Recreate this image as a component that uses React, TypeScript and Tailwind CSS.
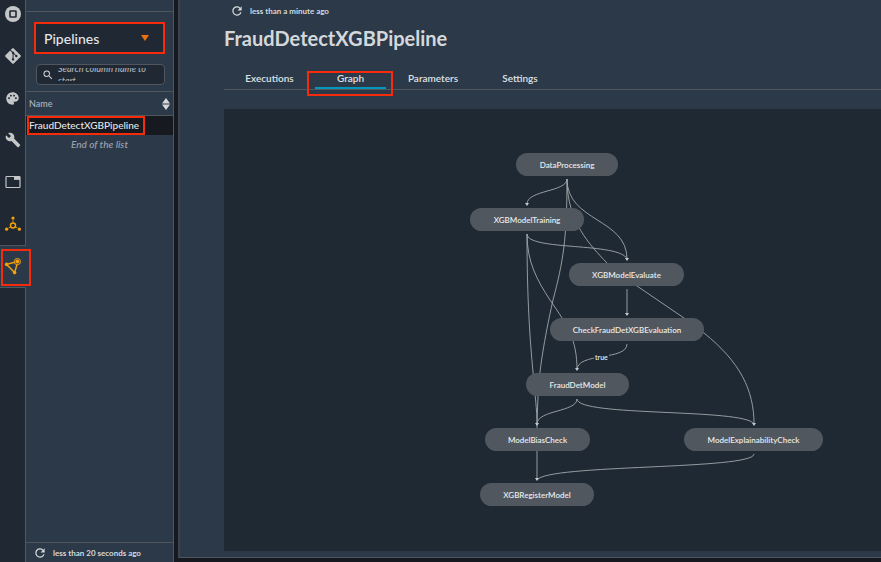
import { useState, type ReactNode } from "react";
import { FaGitAlt } from "react-icons/fa";
import { MdBuild, MdPalette, MdRefresh, MdSearch } from "react-icons/md";

const ORANGE = "#f2a10d";

function StopIcon() {
  return (
    <svg width="16" height="16" viewBox="0 0 16 16" aria-hidden="true">
      <circle cx="8" cy="8" r="8" fill="#c4c6c8" />
      <rect x="5" y="5" width="6" height="6" rx="0.5" fill="#c4c6c8" stroke="#1f2833" strokeWidth="1.6" />
    </svg>
  );
}

function TabIcon() {
  return (
    <svg width="16" height="14" viewBox="0 0 16 14" aria-hidden="true">
      <rect x="1" y="1.5" width="14" height="11" rx="0.8" fill="none" stroke="#c4c6c8" strokeWidth="1.2" />
      <path d="M9 1.5h6v3.4H9z" fill="#c4c6c8" />
    </svg>
  );
}

function HubIcon() {
  return (
    <svg width="18" height="18" viewBox="0 0 18 18" fill={ORANGE} stroke={ORANGE} aria-hidden="true">
      <circle cx="9" cy="10.5" r="2.5" fill="none" strokeWidth="1.5" />
      <path d="M9 3v5M3 14l3.6-2.1M15 14l-3.6-2.1" fill="none" strokeWidth="0.9" strokeDasharray="1.6 0.6" />
      <g stroke="none">
        <circle cx="9" cy="3" r="1.6" />
        <circle cx="2.6" cy="14.2" r="1.6" />
        <circle cx="15.4" cy="14.2" r="1.6" />
      </g>
    </svg>
  );
}

function GraphIcon() {
  return (
    <svg width="18" height="18" viewBox="0 0 18 18" fill={ORANGE} stroke={ORANGE} aria-hidden="true">
      <path d="M2.6 7.4l8-2.2M2.6 7.4l8 8.2M10.6 15.6l2.4-8" fill="none" strokeWidth="1.5" />
      <circle cx="13.4" cy="4.6" r="3.1" fill="none" strokeWidth="1" />
      <g stroke="none">
        <circle cx="13.4" cy="4.6" r="2" />
        <circle cx="2.6" cy="7.4" r="1.8" />
        <circle cx="10.6" cy="15.6" r="1.8" />
      </g>
    </svg>
  );
}

const railItems: { label: string; icon: ReactNode }[] = [
  { label: "Running sessions", icon: <StopIcon /> },
  { label: "Git", icon: <FaGitAlt size={18} /> },
  { label: "Commands", icon: <MdPalette size={15} /> },
  { label: "Property inspector", icon: <MdBuild size={16} /> },
  { label: "Open tabs", icon: <TabIcon /> },
  { label: "Components", icon: <HubIcon /> },
  { label: "Pipelines", icon: <GraphIcon /> },
];

function Highlight({ className }: { className: string }) {
  return <span className={`pointer-events-none absolute border-2 border-[#f52b0c] ${className}`} />;
}

function Rail() {
  return (
    <nav className="flex w-[26px] shrink-0 flex-col bg-[#1f2833]">
      <div className="-mt-[7px] flex flex-col">
        {railItems.map((item) => {
          const active = item.label === "Pipelines";
          return (
            <button
              key={item.label}
              type="button"
              aria-label={item.label}
              className={`relative flex items-center justify-center text-[#c4c6c8] ${
                active
                  ? "h-[43px] border-y border-[#50565d] bg-[#2c3949] pb-[2px] pr-px"
                  : "h-[42px] border-r border-[#50565d]"
              }`}
            >
              {item.icon}
              {active && <Highlight className="-right-[5px] bottom-px left-px top-[3px] z-10" />}
            </button>
          );
        })}
      </div>
      <div className="flex-1 border-r border-[#50565d]" />
    </nav>
  );
}

function Sidebar() {
  return (
    <aside className="flex w-[148px] shrink-0 flex-col border-r border-[#50565d] bg-[#2c3949]">
      <div className="mt-[11px] border-t border-[#50565d] px-2 pt-[10px]">
        <div className="relative flex h-8 items-center bg-[#1f2833]">
          <select
            aria-label="Resource"
            className="h-full w-full appearance-none bg-transparent pl-[10px] text-[14px] font-medium text-[#e4e6e8] outline-none"
          >
            <option>Pipelines</option>
          </select>
          <svg className="pointer-events-none absolute right-4" width="8" height="6" viewBox="0 0 8 6" aria-hidden="true">
            <path d="M0 0h8L4 6z" fill="#ec7211" />
          </svg>
          <Highlight className="inset-0" />
        </div>
        <label className="ml-[2px] mt-[10px] flex h-[21px] items-center gap-1 rounded-sm border border-[#50565d] bg-[#1f2833] pl-[5px] text-[#d0d3d6]">
          <MdSearch size={12} className="shrink-0" />
          <span className="flex h-[13px] flex-1 items-center overflow-hidden">
            <textarea
              aria-label="Search column name"
              placeholder="Search column name to start"
              rows={2}
              className="h-6 w-full shrink-0 resize-none overflow-hidden bg-transparent text-[9px] font-semibold italic leading-[12px] outline-none placeholder:text-[#a9aeb4]"
            />
          </span>
        </label>
      </div>
      <table className="mt-[6px] w-full border-collapse text-left">
        <thead>
          <tr className="h-6 border-y border-[#50565d]">
            <th className="p-0 pl-[3px] text-[9px] font-medium text-[#b0b5bb]">
              <span className="flex items-center justify-between pr-[3px]">
                Name
                <svg width="8" height="12" viewBox="0 0 8 12" aria-hidden="true">
                  <path d="M4 0l4 5.4H0zM4 12L0 6.6h8z" fill="#d5d8db" />
                </svg>
              </span>
            </th>
          </tr>
        </thead>
        <tbody>
          <tr className="h-[19px] bg-[#16191f]">
            <td className="relative p-0 pl-[3px] text-[10px] font-medium leading-[19px] text-[#e4e6e8]">
              FraudDetectXGBPipeline
              <Highlight className="bottom-0 left-px right-7 top-0" />
            </td>
          </tr>
        </tbody>
      </table>
      <p className="mt-px text-center text-[10px] font-semibold italic leading-4 text-[#969ea8]">End of the list</p>
      <footer className="mt-auto flex h-5 items-center gap-[6px] border-t border-[#50565d] pl-[7px] text-[8px] font-bold text-[#d5d8db]">
        <MdRefresh size={14} />
        less than 20 seconds ago
      </footer>
    </aside>
  );
}

const nodes: { name: string; place: string }[] = [
  { name: "DataProcessing", place: "left-[292px] top-[44px] w-[102px]" },
  { name: "XGBModelTraining", place: "left-[246px] top-[99px] w-[114px]" },
  { name: "XGBModelEvaluate", place: "left-[345px] top-[154px] w-[115px]" },
  { name: "CheckFraudDetXGBEvaluation", place: "left-[326px] top-[209px] w-[154px]" },
  { name: "FraudDetModel", place: "left-[302px] top-[264px] w-[103px]" },
  { name: "ModelBiasCheck", place: "left-[261px] top-[319px] w-[105px]" },
  { name: "ModelExplainabilityCheck", place: "left-[460px] top-[319px] w-[139px]" },
  { name: "XGBRegisterModel", place: "left-[256px] top-[374px] w-[114px]" },
];

const edges = [
  "M567 179C567 192 527 190 527 204",
  "M567 179C567 222 627 218 627 259",
  "M567 179C567 222 590 245 607 263C615 272 627 279 637 286L684 318L704 333C740 362 754 390 754 424",
  "M567 179C567 240 563 262 553 300C544 340 539 372 538 396L537 424",
  "M527 234C527 251 620 242 627 259",
  "M527 234C527 262 537 280 550 300C568 326 577 340 577 370",
  "M527 234C527 300 530 340 533 372C535 396 537 410 537 424",
  "M537 424V480",
  "M627 289V315",
  "M627 344C627 361 577 352 577 370",
  "M577 399C577 412 537 410 537 424",
  "M577 399C577 417 745 408 754 424",
  "M754 454C754 470 547 464 537 480",
];

const tips = [
  [527, 204],
  [627, 259],
  [627, 314],
  [577, 369],
  [537, 424],
  [754, 424],
  [537, 479],
];

function PipelineGraph() {
  return (
    <section aria-label="Pipeline graph" className="relative flex-1 overflow-hidden bg-[#1f2933]">
      <svg width="657" height="442" viewBox="224 109 657 442" fill="none" aria-hidden="true">
        {edges.map((d) => (
          <path key={d} d={d} stroke="#a2a7ac" strokeWidth="0.9" />
        ))}
        {tips.map(([x, y]) => (
          <path key={`${x}-${y}`} d={`M${x - 2} ${y - 1}h4l-2 3z`} fill="#c6c9cc" />
        ))}
      </svg>
      {nodes.map((node) => (
        <div
          key={node.name}
          className={`absolute flex h-[23px] items-center justify-center rounded-full bg-[#50575e] text-[8px] font-semibold text-[#e8eaeb] ${node.place}`}
        >
          {node.name}
        </div>
      ))}
      <span className="absolute left-[370px] top-[243px] bg-[#1f2933] px-px text-[7px] font-semibold leading-[10px] text-[#e8eaeb]">
        true
      </span>
    </section>
  );
}

const tabs = [
  { name: "Executions", width: "w-[91px]" },
  { name: "Graph", width: "w-[71px]" },
  { name: "Parameters", width: "w-[94px]" },
  { name: "Settings", width: "w-[80px]" },
];

function Main() {
  const [current, setCurrent] = useState("Graph");
  return (
    <main className="ml-1 mb-1 flex min-w-0 flex-1 flex-col border-b border-l-2 border-[#50565d] border-l-[#3d4248] bg-[#2c3949] pb-[6px] pl-[44px]">
      <div className="mt-1 flex h-[14px] items-center gap-[6px] pl-[6px] text-[8px] font-bold text-[#d5d8db]">
        <MdRefresh size={14} />
        less than a minute ago
      </div>
      <h1 className="mt-[6px] text-[20px] font-bold leading-7 text-[#d5d8db]">FraudDetectXGBPipeline</h1>
      <div role="tablist" className="mt-4 flex h-[22px] border-b border-[#50565d]">
        {tabs.map((tab) => (
          <button
            key={tab.name}
            type="button"
            role="tab"
            aria-selected={tab.name === current}
            onClick={() => setCurrent(tab.name)}
            className={`relative text-[10px] font-semibold text-[#dfe1e3] ${tab.width}`}
          >
            {tab.name}
            {tab.name === current && <span className="absolute inset-x-0 bottom-0 h-[2px] bg-[#0497bd]" />}
            {tab.name === "Graph" && <Highlight className="-bottom-[7px] -left-2 -right-[7px] top-[3px]" />}
          </button>
        ))}
      </div>
      <div className="h-[19px] shrink-0" />
      <PipelineGraph />
    </main>
  );
}

export default function App() {
  return (
    <div className="flex h-screen overflow-hidden bg-[#16191f] font-['Lato','Noto_Sans',sans-serif]">
      <Rail />
      <Sidebar />
      <Main />
    </div>
  );
}
